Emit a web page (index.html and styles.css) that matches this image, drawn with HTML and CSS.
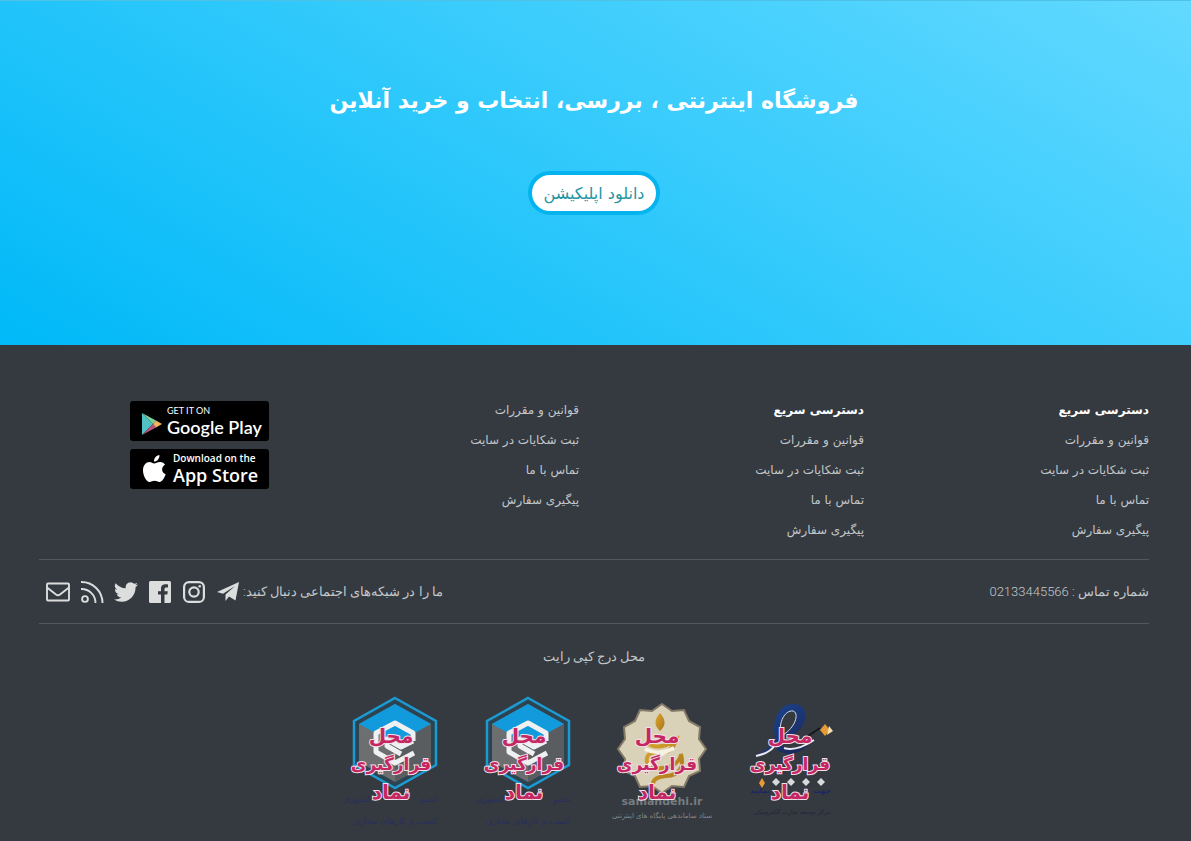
FILE: index.html
```html
<!DOCTYPE html>
<html lang="fa" dir="rtl">
<head>
<meta charset="utf-8">
<title>فروشگاه اینترنتی</title>
<link rel="stylesheet" href="styles.css">
</head>
<body>
<svg class="defs" aria-hidden="true">
  <defs>
    <linearGradient id="swoosh" x1="0" y1="0" x2="1" y2="1"><stop offset="0" stop-color="#1a4a9c"/><stop offset="1" stop-color="#1c2350"/></linearGradient>
    <linearGradient id="gold" x1="0" y1="0" x2="1" y2="1"><stop offset="0" stop-color="#dba72c"/><stop offset="1" stop-color="#a9751c"/></linearGradient>
    <symbol id="union" viewBox="0 0 120 140">
      <path d="M60 8 101 31V75L60 98 19 75V31Z" fill="#2c4452" stroke="#1b9bd1" stroke-width="2.500"/>
      <path d="M60 14 96 34V72L60 92 24 72V34Z" fill="#6c6e70"/>
      <path d="M60 14 96 34 60 54 24 34Z" fill="#119bdc"/>
      <path d="M60 54V92L96 72V34Z" fill="#5a5d60"/>
      <path d="M78 51V43L60 33 41 43V62L60 73 79 63M78 51 66 57 52 49V56L66 64" fill="none" stroke="#eef0f1" stroke-width="5" stroke-linejoin="round"/>
    </symbol>
  </defs>
</svg>
<section class="hero">
  <h1 class="hero-title">فروشگاه اینترنتی ، بررسی، انتخاب و خرید آنلاین</h1>
  <button class="hero-button" type="button">دانلود اپلیکیشن</button>
</section>
<footer class="footer">
  <div class="columns">
    <nav class="column">
      <h2 class="column-title">دسترسی سریع</h2>
      <a class="link" href="#">قوانین و مقررات</a>
      <a class="link" href="#">ثبت شکایات در سایت</a>
      <a class="link" href="#">تماس با ما</a>
      <a class="link" href="#">پیگیری سفارش</a>
    </nav>
    <nav class="column">
      <h2 class="column-title">دسترسی سریع</h2>
      <a class="link" href="#">قوانین و مقررات</a>
      <a class="link" href="#">ثبت شکایات در سایت</a>
      <a class="link" href="#">تماس با ما</a>
      <a class="link" href="#">پیگیری سفارش</a>
    </nav>
    <nav class="column">
      <a class="link" href="#">قوانین و مقررات</a>
      <a class="link" href="#">ثبت شکایات در سایت</a>
      <a class="link" href="#">تماس با ما</a>
      <a class="link" href="#">پیگیری سفارش</a>
    </nav>
    <div class="stores">
      <a class="store google" href="#" dir="ltr">
        <svg class="store-icon" viewBox="0 0 22 24" aria-hidden="true">
          <path d="M1 1V23L12 12Z" fill="#4fc3c4"/><path d="M1 1 15 8.500 12 12Z" fill="#7bd39b"/><path d="M1 23 15 15.500 12 12Z" fill="#b9527c"/><path d="M15 8.500 21 12 15 15.500 12 12Z" fill="#f2b45c"/>
        </svg>
        <span class="store-text"><span class="store-small">GET IT ON</span><span class="store-big">Google Play</span></span>
      </a>
      <a class="store apple" href="#" dir="ltr">
        <svg class="store-icon" viewBox="0 0 24 30" aria-hidden="true">
          <path fill="#fff" d="M12 9.500C14 9.500 15 8 18 8C20.500 8 22.200 9.200 23 10.700C18.800 13 19.400 18.600 23.700 20.300C22.500 23.800 20 28 17.500 28C15.500 28 14.800 26.800 12.500 26.800C10.200 26.800 9.400 28 7.600 28C4.500 28 1 22 1 16.500C1 11 4.200 8 7.400 8C9.600 8 10.700 9.500 12 9.500ZM12 7.600C11.800 4.200 14.400 1.300 17.400 1C17.900 4.400 15 7.700 12 7.600Z"/>
        </svg>
        <span class="store-text"><span class="store-small">Download on the</span><span class="store-big">App Store</span></span>
      </a>
    </div>
  </div>
  <div class="contact">
    <p class="note">شماره تماس : 02133445566</p>
    <div class="social">
      <p class="note">ما را در شبکه‌های اجتماعی دنبال کنید:</p>
      <div class="icons">
      <a class="icon" href="#" aria-label="Telegram"><svg viewBox="0 0 24 24"><path fill="currentColor" d="M1 12 23 2 19.500 20.500 13 16.500 9.500 21V14.500L19 6 7 13.800Z"/></svg></a>
      <a class="icon" href="#" aria-label="Instagram"><svg viewBox="0 0 24 24" fill="none" stroke="currentColor" stroke-width="2.200"><rect x="2.100" y="2.100" width="19.800" height="19.800" rx="5"/><circle cx="12" cy="12" r="4.700"/><circle cx="17.700" cy="6.300" r="1.300" fill="currentColor" stroke="none"/></svg></a>
      <a class="icon" href="#" aria-label="Facebook"><svg viewBox="0 0 24 24"><path fill="currentColor" d="M2.500 1H21.500Q23 1 23 2.500V21.500Q23 23 21.500 23H16.500V14.500H19.300L19.800 11.200H16.500V9.200C16.500 8 17 7.500 18.200 7.500H20V4.500C16 3.900 13 4.700 13 8.600V11.200H10V14.500H13V23H2.500Q1 23 1 21.500V2.500Q1 1 2.500 1Z"/></svg></a>
      <a class="icon" href="#" aria-label="Twitter"><svg viewBox="0 0 24 24"><path fill="currentColor" d="M23.950 4.570a10 10 0 0 1-2.820.78 4.960 4.960 0 0 0 2.160-2.720c-.95.550-2 .960-3.130 1.180a4.920 4.920 0 0 0-8.380 4.480C7.690 8.100 4.070 6.130 1.640 3.160a4.920 4.920 0 0 0 1.520 6.570 4.900 4.900 0 0 1-2.230-.61v.06a4.920 4.920 0 0 0 3.950 4.830 5 5 0 0 1-2.210.08 4.940 4.940 0 0 0 4.600 3.420A9.870 9.870 0 0 1 0 19.540a13.990 13.990 0 0 0 7.550 2.210c9.050 0 14-7.500 14-13.980v-.63a9.940 9.940 0 0 0 2.460-2.550z"/></svg></a>
      <a class="icon" href="#" aria-label="RSS"><svg viewBox="0 0 24 24" fill="none" stroke="currentColor" stroke-width="1.900"><circle cx="5" cy="19" r="2.900"/><path d="M1 9A14 14 0 0 1 15.500 23M1 2A21 21 0 0 1 22.500 23"/></svg></a>
      <a class="icon" href="#" aria-label="Email"><svg viewBox="0 0 24 24" fill="none" stroke="currentColor" stroke-width="1.900"><rect x="1" y="3.500" width="22" height="17" rx="1"/><path d="M1 7.500 10 14.500Q12 16 14 14.500L23 7.500"/></svg></a>
      </div>
    </div>
  </div>
  <p class="note copyright">محل درج کپی رایت</p>
  <div class="seals">
    <svg class="seal" viewBox="0 0 120 140" role="img">
      <path d="M20 66C30 62 38 56 41 47C37 32 45 14 59 14C73 14 75 28 67 38C62 44 54 48 47 50C48 59 57 62 76 54C62 67 46 67 40 55C34 62 28 66 20 66Z" fill="url(#swoosh)"/>
      <path d="M47 46C44 32 51 20 59 21C66 23 61 39 47 46Z" fill="#343a40" stroke="#d5dbe8"/>
      <path d="M22 66C32 64 38 60 41 55M50 58Q62 62 80 50" fill="none" stroke="#e8e8ee" stroke-width="2"/>
      <path d="M74 46 86 38" stroke="#15181c" stroke-width="2"/>
      <path d="M91 34 96 40 91 46 86 40Z" fill="#e79a35"/><path d="M95 36 99 41 93 45Z" fill="#f6dfae"/>
      <path d="M28 88 31 93 28 98 25 93Z" fill="#e79a35"/>
      <path d="M42 88 46 92 42 96 38 92ZM57 88 61 92 57 96 53 92ZM72 88 76 92 72 96 68 92ZM87 88 91 92 87 96 83 92Z" fill="#d8d9da"/>
      <text class="seal-name navy" x="88" y="103">جهت</text>
      <text class="seal-name navy" x="26" y="103">نمایید</text>
      <text class="seal-name script" x="58" y="124">مرکز توسعه تجارت الکترونیکی</text>
      <text class="seal-mark short" x="56" y="53">محل</text><text class="seal-mark" x="56" y="80">قرارگیری</text><text class="seal-mark short" x="56" y="109">نماد</text>
    </svg>
    <svg class="seal" viewBox="0 0 120 140" role="img">
      <path d="M61 14 71 21 83 20 88 31 99 37 98 49 105 59 98 69 99 81 88 86 83 97 71 96 61 103 51 96 39 97 34 86 23 81 24 69 17 59 24 49 23 37 34 31 39 20 51 21Z" fill="#d9d2b8" stroke="#837966" stroke-width="2"/>
      <path d="M59 23Q68 33 59 41Q50 33 59 23Z" fill="url(#gold)"/>
      <path d="M45 52Q56 62 75 50Q70 65 56 62 44 63 46 72 52 82 71 76 80 70 80 64Q85 85 65 86 52 87 52 94" fill="none" stroke="url(#gold)" stroke-width="4"/>
      <path d="M44 59Q58 66 73 58Q52 67 48 76" fill="none" stroke="#f7f3e4" stroke-width="4"/>
      <text class="seal-name latin" x="61" y="115">samandehi.ir</text>
      <text class="seal-name pale" x="61" y="128">ستاد ساماندهی پایگاه های اینترنتی</text>
      <text class="seal-mark short" x="56" y="53">محل</text><text class="seal-mark" x="56" y="80">قرارگیری</text><text class="seal-mark short" x="56" y="109">نماد</text>
    </svg>
    <svg class="seal" viewBox="0 0 120 140" role="img">
      <use href="#union"/>
      <text class="seal-name" x="94" y="112">عضو</text><text class="seal-name" x="22" y="112">کشوری</text><text class="seal-name" x="60" y="134">کسب و کارهای مجازی</text>
      <text class="seal-mark short" x="56" y="53">محل</text><text class="seal-mark" x="56" y="80">قرارگیری</text><text class="seal-mark short" x="56" y="109">نماد</text>
    </svg>
    <svg class="seal" viewBox="0 0 120 140" role="img">
      <use href="#union"/>
      <text class="seal-name" x="94" y="112">عضو</text><text class="seal-name" x="22" y="112">کشوری</text><text class="seal-name" x="60" y="134">کسب و کارهای مجازی</text>
      <text class="seal-mark short" x="56" y="53">محل</text><text class="seal-mark" x="56" y="80">قرارگیری</text><text class="seal-mark short" x="56" y="109">نماد</text>
    </svg>
  </div>
</footer>
</body>
</html>
```
FILE: styles.css
```css
* { box-sizing: border-box; }
body { margin: 0; background: #343a40; font-family: "DejaVu Sans", sans-serif; }
h1, h2, p { margin: 0; font-weight: 400; }
a { color: inherit; text-decoration: none; }
.defs { position: absolute; width: 0; height: 0; }

.hero { display: flex; flex-direction: column; align-items: center; gap: 50px; padding: 80px 3px 130px 0; border-top: 1px solid #4fc0e6; background: linear-gradient(30deg, #00b9f8, #62d9ff); }
.hero-title { color: #fff; font-size: 22px; font-weight: 700; line-height: 40px; }
.hero-button { height: 44px; padding: 0 12px; border: 4px solid #05b4ee; border-radius: 22px; background: #fff; color: #2395a5; font-family: inherit; font-size: 16px; }

.footer { padding: 50px 42px 4px 39px; background: #343a40; color: #c3c7ca; font-size: 12px; }
.columns { display: grid; grid-template-columns: repeat(4, 1fr); gap: 30px; padding-bottom: 14px; border-bottom: 1px solid #52585d; }
.column { display: flex; flex-direction: column; align-items: flex-start; line-height: 30px; }
.column-title { color: #fff; font-size: 12px; font-weight: 700; line-height: 30px; }
.stores { display: flex; flex-direction: column; align-items: flex-start; gap: 8px; padding: 6px 25px 0 0; }
.store { display: flex; align-items: center; width: 139px; height: 40px; border-radius: 3px; background: #000; color: #fff; font-family: "Open Sans", sans-serif; white-space: nowrap; }
.store-text { display: flex; flex-direction: column; }
.google { gap: 4px; padding-left: 11px; }
.apple { gap: 7px; padding-left: 12px; }
.google .store-icon { width: 22px; margin-top: 6px; }
.apple .store-icon { width: 24px; }
.store-small { font-size: 9px; line-height: 12px; }
.store-big { font-size: 18px; font-weight: 600; line-height: 22px; }
.google .store-text { font-family: Lato, sans-serif; }
.google .store-big { line-height: 20px; }
.apple .store-small { font-size: 10px; font-weight: 600; }

.contact { display: flex; align-items: center; justify-content: space-between; height: 64px; border-bottom: 1px solid #52585d; }
.social { display: flex; align-items: center; gap: 3px; }
.icons { display: flex; align-items: center; gap: 10px; padding-left: 7px; color: #dcdddd; }
.icon, .icon svg { display: block; width: 24px; height: 24px; }
.note { font-family: Roboto, "DejaVu Sans", sans-serif; font-size: 13px; font-weight: 300; line-height: 24px; }
.copyright { padding-top: 21px; text-align: center; }
.seals { display: flex; justify-content: center; gap: 13px; padding-top: 21px; }
.seal { display: block; width: 120px; height: 140px; }
.seal text { direction: rtl; text-anchor: middle; }
.seal-mark { fill: #c52763; stroke: #f2dfe6; stroke-width: 2px; paint-order: stroke; font-size: 17px; font-weight: 700; }
.seal .short { font-size: 20px; }
.seal-name { font-size: 9px; fill: #292f5c; }
.seal .latin { direction: ltr; fill: #777b7e; font-size: 11px; font-weight: 700; }
.seal .pale { fill: #85888a; font-size: 7px; }
.seal .navy { fill: #1c2563; font-size: 7px; font-weight: 700; }
.seal .script { fill: #20263b; font-size: 6px; }
```
